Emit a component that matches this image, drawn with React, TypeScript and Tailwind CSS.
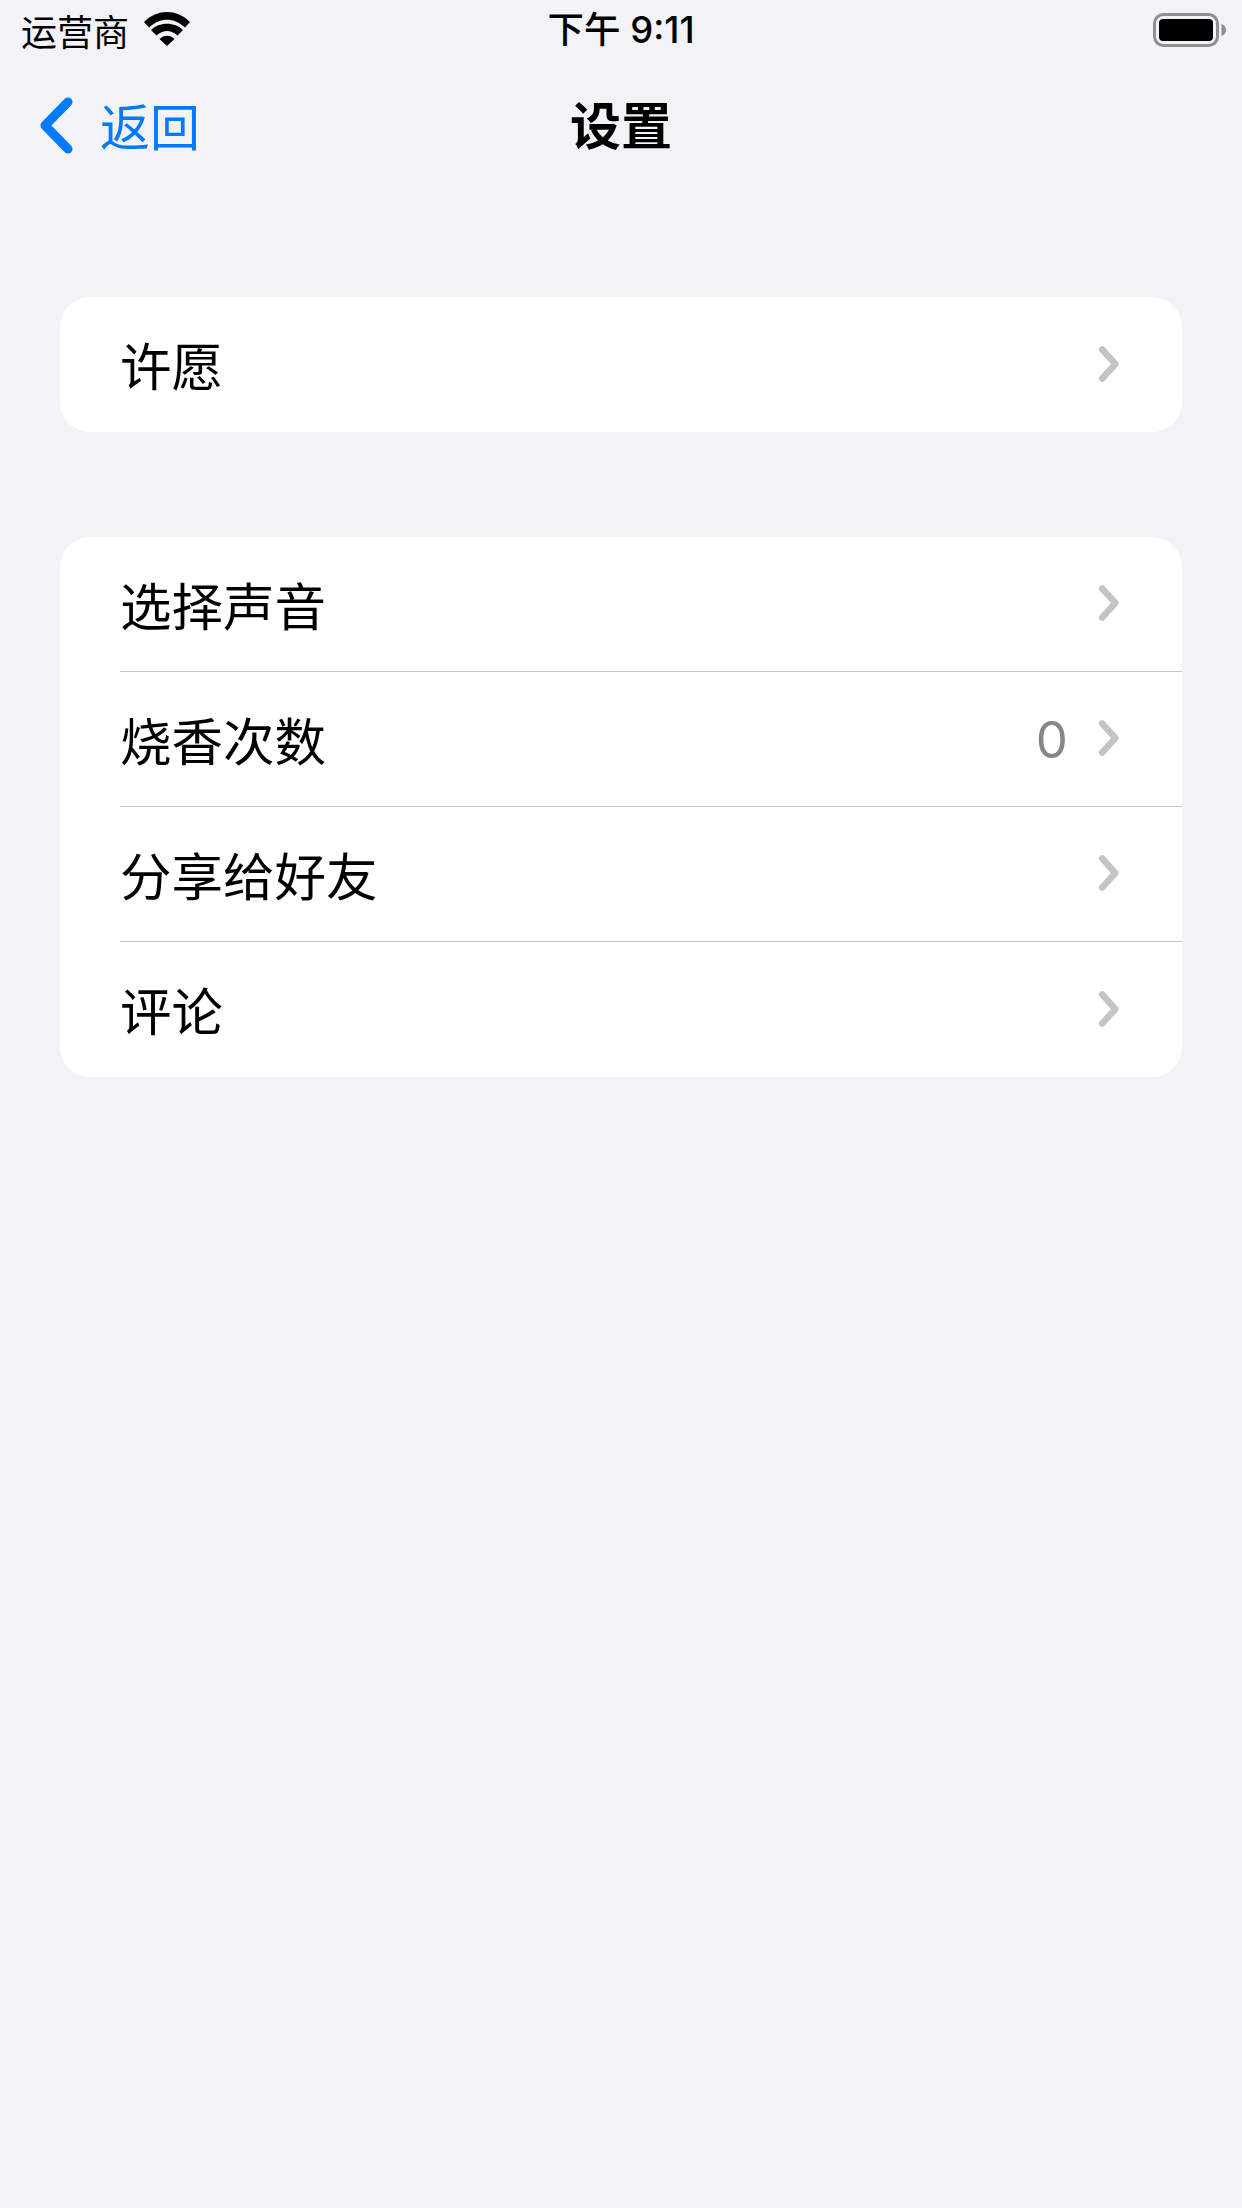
const rows = [
  { label: '选择声音' },
  { label: '烧香次数', value: '0' },
  { label: '分享给好友' },
  { label: '评论' },
]

function Chevron() {
  return (
    <svg width="27" height="42" viewBox="0 0 27 42" className="shrink-0 -mt-[2px]">
      <path d="M6.2 6.5 L19.4 21 L6.2 35.5" fill="none" stroke="#c4c4c7" strokeWidth="6.5" strokeLinecap="round" strokeLinejoin="round" />
    </svg>
  )
}

function Row({ label, value, last }: { label: string; value?: string; last?: boolean }) {
  return (
    <div className="h-[135px] pl-[60px] flex">
      <div className={`flex-1 flex items-center justify-between pr-[59px] ${last ? '' : 'border-b-[1.5px] border-[#c6c6c8]'}`}>
        <span className="text-[51.5px] leading-none text-black -mt-[1px]">{label}</span>
        <div className="flex items-center gap-[28px]">
          {value && <span className="text-[51px] leading-none font-normal text-[#87878b] font-['Inter']">{value}</span>}
          <Chevron />
        </div>
      </div>
    </div>
  )
}

export default function App() {
  return (
    <div className="w-[1242px] h-[2208px] bg-[#f2f2f7] overflow-hidden font-['Noto_Sans_CJK_SC','Noto_Sans',sans-serif]">
      {/* Status bar */}
      <div className="h-[60px] grid grid-cols-3 items-center px-[16px]">
        <div className="flex items-center gap-[15px] pl-[5px]">
          <span className="text-[36px] leading-none text-black -mt-[1px]">运营商</span>
          <svg width="46" height="34" viewBox="0 0 46 34" className="-mt-[3px]">
            <path d="M0 10 C13 -3.3 33 -3.3 46 10 L41 15.5 C30 5 16 5 5 15.5 Z" fill="#000" />
            <path d="M7 18 C15 9.5 31 9.5 39 18 L33.5 23.5 C27 17.5 19 17.5 12.5 23.5 Z" fill="#000" />
            <path d="M15.5 27 C19.5 22.5 26.5 22.5 30.5 27 L23 34 Z" fill="#000" />
          </svg>
        </div>
        <div className="text-center text-[36.5px] leading-none font-medium text-black mt-[1px] font-['Inter','Noto_Sans_CJK_SC',sans-serif]">下午 9:11</div>
        <div className="flex justify-end">
          <svg width="73" height="34" viewBox="0 0 73 34">
            <rect x="1.5" y="1.5" width="63" height="31" rx="9" fill="none" stroke="#8e8e93" strokeWidth="3" />
            <rect x="6" y="6" width="54" height="22" rx="4" fill="#000" />
            <path d="M68.5 11 C71.5 12 73 14 73 17 C73 20 71.5 22 68.5 23 Z" fill="#8e8e93" />
          </svg>
        </div>
      </div>

      {/* Nav bar */}
      <div className="h-[134px] grid grid-cols-3 items-center px-[40px]">
        <div className="flex items-center gap-[27px] -mt-[3px]">
          <svg width="33" height="57" viewBox="0 0 33 57" className="shrink-0">
            <path d="M28 5 L5 28.5 L28 52" fill="none" stroke="#007aff" strokeWidth="9" strokeLinecap="round" strokeLinejoin="round" />
          </svg>
          <span className="text-[50px] leading-none text-[#007aff] -mt-[3px]">返回</span>
        </div>
        <div className="text-center text-[51px] leading-none font-bold text-black -mt-[8px]">设置</div>
      </div>

      {/* Settings groups */}
      <div className="mx-[60px] mt-[103px] flex flex-col gap-[105px]">
        <div className="bg-white rounded-[30px] overflow-hidden">
          <Row label="许愿" last />
        </div>
        <div className="bg-white rounded-[30px] overflow-hidden">
          {rows.map((row, i) => (
            <Row key={row.label} label={row.label} value={row.value} last={i === rows.length - 1} />
          ))}
        </div>
      </div>
    </div>
  )
}
